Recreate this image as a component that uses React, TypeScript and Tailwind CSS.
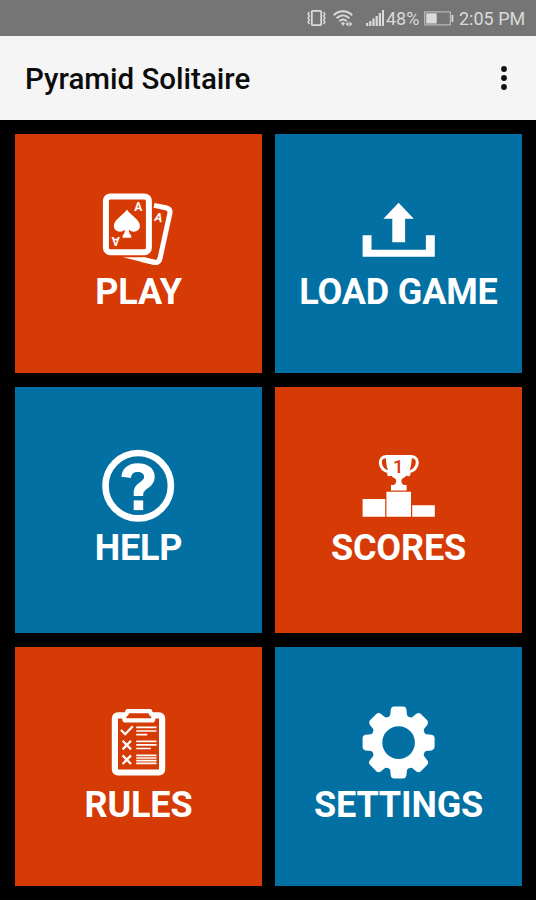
import type { ReactNode } from "react";

interface TileProps {
  label: string;
  color: "red" | "blue";
  children: ReactNode;
}

function Tile({ label, color, children }: TileProps) {
  const bg = color === "red" ? "bg-[#d63a05]" : "bg-[#0270a2]";

  return (
    <button
      className={`flex flex-col items-center pt-[60px] text-white ${bg}`}
    >
      <svg
        className="mr-[2px] h-[72px] w-[72px] shrink-0 overflow-visible"
        viewBox="0 0 72 72"
      >
        {children}
      </svg>
      <span className="text-[36px] leading-[52px] font-bold tracking-[-0.15px] whitespace-nowrap">
        {label}
      </span>
    </button>
  );
}

function CardsIcon() {
  return (
    <>
      <rect
        x="3.9"
        y="2.4"
        width="43"
        height="55.8"
        rx="4.5"
        fill="none"
        stroke="currentColor"
        strokeWidth="6"
      />
      <path
        fill="currentColor"
        d="M24.900 15.600c3 5.200 13 9.800 13 16.400 0 5.500-6.800 7.500-11 3.800.1 2.900.8 4.500 2.300 5.600v2.400h-8.600v-2.400c1.500-1.100 2.200-2.700 2.300-5.600-4.200 3.700-11 1.700-11-3.800 0-6.600 10-11.200 13-16.400z"
      />
      <path
        fill="none"
        stroke="currentColor"
        strokeWidth="5"
        strokeLinejoin="round"
        d="M52 11.400L63.800 13.700q5 1.200 4.100 5.600L58 64.500q-1.200 4.600-5.500 3.800L40 65.600"
      />
      <path fill="currentColor" d="M21 63.300h22l11 3-2 4.700z" />
      <g fill="currentColor" fontSize="12" fontWeight="700" textAnchor="middle">
        <text x="36.300" y="17">
          A
        </text>
        <text transform="translate(13.700 43.300) rotate(180)">A</text>
        <text transform="translate(55.600 27.400) rotate(13)">A</text>
      </g>
    </>
  );
}

function LoadIcon() {
  return (
    <g fill="currentColor">
      <path d="M36.600 8.800L51.800 24.700H43.100V48.300H30.300V24.700H21.400Z" />
      <path d="M.6 41.200h8.900v14.500h54.400V41.200h8.900v21.600H.6z" />
    </g>
  );
}

function HelpIcon() {
  return (
    <>
      <circle
        cx="36.200"
        cy="35.700"
        r="32.700"
        fill="none"
        stroke="currentColor"
        strokeWidth="6.600"
      />
      <path
        fill="currentColor"
        d="M19.400 26.700C20.200 17.700 26.700 13.200 35.700 13.200c9.500 0 17 4.600 17 13.500 0 5.800-3.500 9.100-7.300 11.900-3.200 2.400-4.200 3.800-4.200 7.300h-9.500v-2.800c0-5 2.100-7.900 5.600-10.400 3-2.200 4.800-3.300 4.800-5.900 0-3-2.700-4.700-6.400-4.700-4 0-6.200 2-6.800 5.800z"
      />
      <rect x="31.700" y="50.400" width="9.500" height="9.700" fill="currentColor" />
    </>
  );
}

function TrophyIcon() {
  return (
    <g transform="translate(0 .4)">
      <g fill="none" stroke="currentColor" strokeWidth="3">
        <path d="M26 6.700c-5-1-7.700 1.300-7.700 5.300 0 5.500 4 8.500 9.700 10" />
        <path d="M47.600 6.700c5-1 7.700 1.300 7.700 5.300 0 5.500-4 8.500-9.700 10" />
      </g>
      <path
        fill="currentColor"
        d="M23.800 4.500h26c0 5.500-.4 11.500-2.600 16.500-1.600 3.800-4.400 5.800-6.600 7.200-.8.600-1.200 1.300-1.200 2.300 0 1.900.8 3.300 2.600 4h2.600v5.500H29v-5.500h2.600c1.800-.7 2.600-2.100 2.600-4 0-1-.4-1.700-1.200-2.300-2.200-1.400-5-3.400-6.600-7.200-2.200-5-2.600-11-2.600-16.500z"
      />
      <circle cx="27.300" cy="23.600" r="2.200" fill="currentColor" />
      <circle cx="46.300" cy="23.600" r="2.200" fill="currentColor" />
      <text
        x="36.200"
        y="22.600"
        fill="#d63a05"
        fontSize="18.500"
        fontWeight="500"
        textAnchor="middle"
      >
        1
      </text>
      <path
        fill="currentColor"
        d="M.6 48.700h22.600v17.700H.6zM24.400 41.400h24.600v25H24.400zM50.200 54.800h22.600v11.600H50.200z"
      />
    </g>
  );
}

function ClipboardIcon() {
  return (
    <g fill="none" stroke="currentColor">
      <rect x="12.900" y="8.300" width="47.200" height="57.200" rx="3" strokeWidth="6.200" />
      <path
        fill="#d63a05"
        strokeWidth="4.200"
        strokeLinejoin="round"
        d="M25.500 4.200h22.600l1 2.900 2.200 1.200v3.600q0 1.500-1.500 1.500H23.800q-1.500 0-1.500-1.500V8.300l2.200-1.200z"
      />
      <path
        strokeWidth="2.300"
        d="M18.900 23l4.300 4.200 7.600-8M20.600 33.800l8.400 8.600m0-8.600l-8.400 8.600M20.600 48.400l8.400 8.600m0-8.600L20.600 57"
      />
      <path
        strokeWidth="1.700"
        d="M34.200 20.300h20.300M34.200 24h20.300M34.200 27.600h11M34.200 34.400h20.300M34.200 37.900h20.300M34.200 41.500h14.700M34.200 48.300h20.300M34.200 51h20.300M34.200 53.700h20.300M34.200 56.400h20.300"
      />
    </g>
  );
}

const TOOTH_ANGLES = [0, 45, 90, 135, 180, 225, 270, 315];

function GearIcon() {
  return (
    <g transform="translate(36.600 35.600)" fill="currentColor">
      <circle r="22" fill="none" stroke="currentColor" strokeWidth="11.400" />
      {TOOTH_ANGLES.map((angle) => (
        <path
          key={angle}
          transform={`rotate(${angle})`}
          d="M-4.500-36h9q2.800.2 3.300 3l.6 5.500 1.600 2.500h-20l1.600-2.500.6-5.500q.5-2.800 3.300-3z"
        />
      ))}
    </g>
  );
}

function StatusBar() {
  return (
    <div className="flex h-9 shrink-0 items-center bg-[#757575] pl-[306px] text-[18px] text-[#dadada]">
      <svg
        className="h-[18px] w-[21px] shrink-0"
        viewBox="0 0 21 18"
        fill="none"
        stroke="currentColor"
      >
        <rect x="5.800" y="1.800" width="9.400" height="14.400" rx="1" strokeWidth="1.800" />
        <path
          strokeWidth="1.400"
          d="M3.400 3l-1.400 2 1.400 2L2 9l1.400 2L2 13l1.400 2M17.600 3L19 5l-1.400 2L19 9l-1.400 2 1.400 2-1.400 2"
        />
      </svg>
      <svg
        className="ml-[6px] h-[18px] w-5 shrink-0"
        viewBox="0 0 20 18"
        fill="none"
        stroke="currentColor"
      >
        <path
          strokeWidth="2"
          d="M.8 6.200c5.400-5.200 13-5.200 18.400 0M3.600 9.200c3.900-3.600 8.900-3.600 12.800 0M6.400 12.200c2.200-2 5-2 7.200 0"
        />
        <path
          fill="currentColor"
          stroke="none"
          d="M8 14.200l2-1.200 2 1.200-2 2.800zM12.500 15l3-2.500v5zM19.500 15l-3-2.500v5z"
        />
      </svg>
      <svg
        className="ml-[13px] h-[18px] w-[18px] shrink-0"
        viewBox="0 0 18 18"
        fill="currentColor"
      >
        <path d="M0 14h2.200v3H0zM3.200 12h2.200v5H3.200zM6.400 9.500h2.200V17H6.400zM9.600 7h2.200v10H9.600zM12.800 4H15v13h-2.200zM16 1h2v16h-2z" />
      </svg>
      <span className="ml-[2px] w-[38px] shrink-0">48%</span>
      <svg className="h-[15px] w-[30px] shrink-0" viewBox="0 0 30 15">
        <rect
          x=".7"
          y=".9"
          width="25.600"
          height="13"
          fill="none"
          stroke="currentColor"
          strokeWidth="1.100"
          opacity=".75"
        />
        <rect x="2.200" y="2.300" width="10.500" height="10.200" fill="currentColor" />
        <rect x="27.500" y="4" width="1.800" height="7" fill="currentColor" />
      </svg>
      <span className="ml-[5px] pt-px whitespace-nowrap">2:05 PM</span>
    </div>
  );
}

export default function App() {
  return (
    <div className="flex h-[900px] w-[536px] flex-col overflow-hidden bg-black font-['Roboto',sans-serif]">
      <StatusBar />
      <header className="flex h-[84px] shrink-0 items-center justify-between bg-[#f5f5f5] pr-7 pl-[25px]">
        <h1 className="pt-[3px] text-[29.5px] font-medium text-[#0c0c0c]">
          Pyramid Solitaire
        </h1>
        <svg className="h-6 w-[7px]" viewBox="0 0 7 24" fill="#111">
          <circle cx="3" cy="3" r="2.900" />
          <circle cx="3" cy="12" r="2.900" />
          <circle cx="3" cy="21" r="2.900" />
        </svg>
      </header>
      <main className="grid grid-cols-[247px_247px] grid-rows-[239px_246px_239px] gap-x-[13px] gap-y-[14px] pt-[14px] pl-[15px] [&>*:nth-child(3)]:pt-[63px] [&>*:nth-child(4)]:pt-[63px]">
        <Tile label="PLAY" color="red">
          <CardsIcon />
        </Tile>
        <Tile label="LOAD GAME" color="blue">
          <LoadIcon />
        </Tile>
        <Tile label="HELP" color="blue">
          <HelpIcon />
        </Tile>
        <Tile label="SCORES" color="red">
          <TrophyIcon />
        </Tile>
        <Tile label="RULES" color="red">
          <ClipboardIcon />
        </Tile>
        <Tile label="SETTINGS" color="blue">
          <GearIcon />
        </Tile>
      </main>
    </div>
  );
}
